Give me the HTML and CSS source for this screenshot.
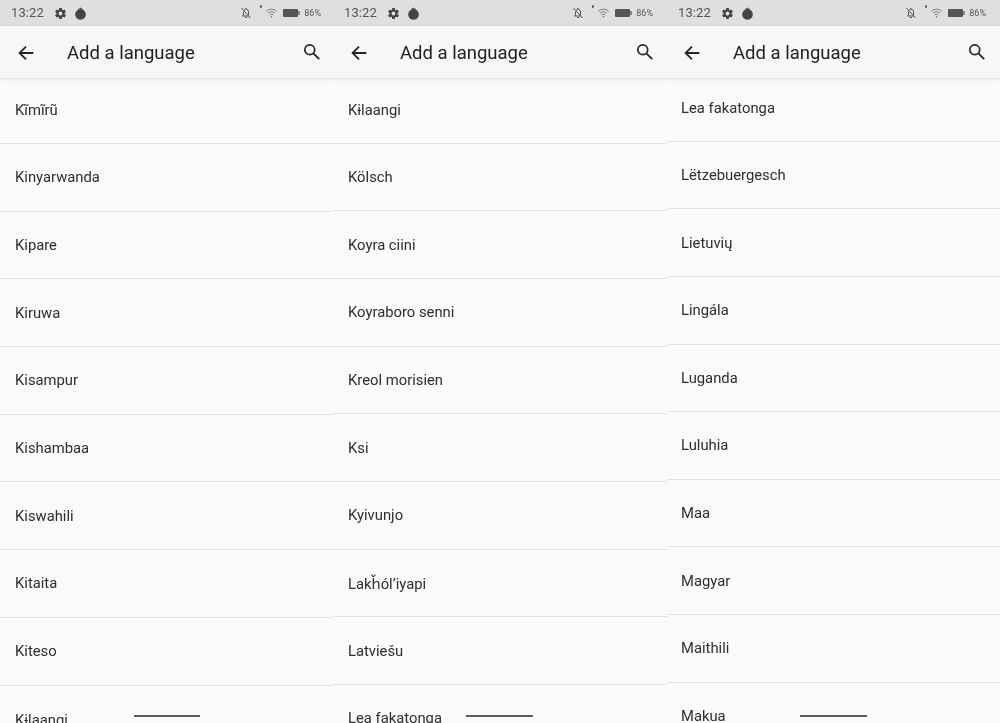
FILE: index.html
```html
<!DOCTYPE html>
<html lang="en">
<head>
<meta charset="utf-8">
<title>Add a language</title>
<link rel="stylesheet" href="styles.css">
</head>
<body>
<svg class="defs" width="0" height="0" aria-hidden="true">
  <defs>
    <symbol id="gear" viewBox="0 0 24 24"><path fill="currentColor" fill-rule="evenodd" d="M19.4 13a7.5 7.5 0 0 0 0-2l2.6-2-2.500-4.300-3 1.200a7.600 7.600 0 0 0-1.700-1L14.400 1.700H9.600L9.200 4.900a7.600 7.600 0 0 0-1.700 1l-3-1.200L2 9l2.600 2a7.500 7.500 0 0 0 0 2L2 15l2.500 4.300 3-1.200a7.600 7.600 0 0 0 1.700 1l.4 3.200h4.800l.4-3.200a7.600 7.600 0 0 0 1.700-1l3 1.200L22 15zM12 15.500a3.500 3.500 0 1 1 0-7 3.500 3.500 0 0 1 0 7z"/></symbol>
    <symbol id="blob" viewBox="0 0 24 24"><path fill="currentColor" d="M12 .5l1.600 2.700 2.600-.9-.7 2.300a9.800 9.800 0 1 1-7 0l-.7-2.300 2.600.9z"/></symbol>
    <symbol id="bell-off" viewBox="0 0 24 24"><path fill="none" stroke="currentColor" stroke-width="2" d="M3 2l18 20M8 6.500A5 5 0 0 1 17 10v6M7 9v7l-2 2h13M10 21h4M12 2v2"/></symbol>
    <symbol id="wifi" viewBox="0 0 24 24"><path fill="none" stroke="currentColor" stroke-width="1.600" d="M1.500 8.500a15 15 0 0 1 21 0M5 12.500a10 10 0 0 1 14 0M8.500 16a5 5 0 0 1 7 0"/><circle cx="12" cy="19.500" r="1.600" fill="currentColor"/></symbol>
    <symbol id="back" viewBox="0 0 24 24"><path fill="none" stroke="currentColor" stroke-width="2" d="M20 12H5M12 5l-7 7 7 7"/></symbol>
    <symbol id="search" viewBox="0 0 20 20"><circle cx="7.500" cy="7.500" r="5.500" fill="none" stroke="currentColor" stroke-width="1.900"/><path fill="none" stroke="currentColor" stroke-width="2" d="M11.500 11.500l6.500 6.500"/></symbol>
  </defs>
</svg>
<main class="screens">

<section class="phone phone-a">
  <div class="status">
    <span class="time">13:22</span>
    <svg class="ic-gear"><use href="#gear"/></svg>
    <svg class="ic-blob"><use href="#blob"/></svg>
    <span class="status-right">
      <svg class="ic-bell"><use href="#bell-off"/></svg>
      <span class="dot"></span>
      <svg class="ic-wifi"><use href="#wifi"/></svg>
      <span class="battery"><span class="battery-nub"></span></span>
      <span class="pct">86%</span>
    </span>
  </div>
  <header class="appbar">
    <svg class="ic-back"><use href="#back"/></svg>
    <h1 class="title">Add a language</h1>
    <svg class="ic-search"><use href="#search"/></svg>
  </header>
  <ul class="list">
    <li class="row">Kĩmĩrũ</li>
    <li class="row">Kinyarwanda</li>
    <li class="row">Kipare</li>
    <li class="row">Kiruwa</li>
    <li class="row">Kisampur</li>
    <li class="row">Kishambaa</li>
    <li class="row">Kiswahili</li>
    <li class="row">Kitaita</li>
    <li class="row">Kiteso</li>
    <li class="row">Kɨlaangi</li>
  </ul>
  <span class="home"></span>
</section>

<section class="phone phone-b">
  <div class="status">
    <span class="time">13:22</span>
    <svg class="ic-gear"><use href="#gear"/></svg>
    <svg class="ic-blob"><use href="#blob"/></svg>
    <span class="status-right">
      <svg class="ic-bell"><use href="#bell-off"/></svg>
      <span class="dot"></span>
      <svg class="ic-wifi"><use href="#wifi"/></svg>
      <span class="battery"><span class="battery-nub"></span></span>
      <span class="pct">86%</span>
    </span>
  </div>
  <header class="appbar">
    <svg class="ic-back"><use href="#back"/></svg>
    <h1 class="title">Add a language</h1>
    <svg class="ic-search"><use href="#search"/></svg>
  </header>
  <ul class="list">
    <li class="row">Kɨlaangi</li>
    <li class="row">Kölsch</li>
    <li class="row">Koyra ciini</li>
    <li class="row">Koyraboro senni</li>
    <li class="row">Kreol morisien</li>
    <li class="row">Ksi</li>
    <li class="row">Kyivunjo</li>
    <li class="row">Lakȟól’iyapi</li>
    <li class="row">Latviešu</li>
    <li class="row">Lea fakatonga</li>
  </ul>
  <span class="home"></span>
</section>

<section class="phone phone-c">
  <div class="status">
    <span class="time">13:22</span>
    <svg class="ic-gear"><use href="#gear"/></svg>
    <svg class="ic-blob"><use href="#blob"/></svg>
    <span class="status-right">
      <svg class="ic-bell"><use href="#bell-off"/></svg>
      <span class="dot"></span>
      <svg class="ic-wifi"><use href="#wifi"/></svg>
      <span class="battery"><span class="battery-nub"></span></span>
      <span class="pct">86%</span>
    </span>
  </div>
  <header class="appbar">
    <svg class="ic-back"><use href="#back"/></svg>
    <h1 class="title">Add a language</h1>
    <svg class="ic-search"><use href="#search"/></svg>
  </header>
  <ul class="list">
    <li class="row">Lea fakatonga</li>
    <li class="row">Lëtzebuergesch</li>
    <li class="row">Lietuvių</li>
    <li class="row">Lingála</li>
    <li class="row">Luganda</li>
    <li class="row">Luluhia</li>
    <li class="row">Maa</li>
    <li class="row">Magyar</li>
    <li class="row">Maithili</li>
    <li class="row">Makua</li>
  </ul>
  <span class="home"></span>
</section>

</main>
</body>
</html>
```
FILE: styles.css
```css
* { box-sizing: border-box; }
html, body { margin: 0; height: 100%; overflow: hidden; background: #fafafa; }
body { font-family: Roboto, "Noto Sans", sans-serif; color: #2b2b2b; }
.defs { position: absolute; }
.screens { display: grid; grid-template-columns: 333px 334px 333px; height: 723px; overflow: hidden; filter: blur(.3px); }
.phone { position: relative; display: flex; flex-direction: column; height: 723px; overflow: hidden; background: #fafafa; }

.status { display: flex; align-items: center; height: 26px; padding: 0 12px 0 11px; background: #dfdfdf; color: #4a4a4a; flex: none; }
.phone-b .status, .phone-c .status { padding-right: 14px; }
.time { font-size: 13px; line-height: 26px; letter-spacing: .1px; width: 33px; color: #555; }
.ic-gear { width: 13px; height: 13px; margin-left: 10px; color: #444; }
.ic-blob { width: 13px; height: 13px; margin-left: 7px; color: #444; }
.status-right { display: flex; align-items: center; margin-left: auto; }
.ic-bell { width: 12px; height: 12px; color: #555; }
.dot { width: 2px; height: 3px; margin: -13px 0 0 8px; background: #555; border-radius: 50%; }
.ic-wifi { width: 13px; height: 12px; margin-left: 3px; color: #666; }
.battery { position: relative; width: 15px; height: 8px; margin: 0 2px 0 5px; background: #555; border-radius: 1px; }
.battery-nub { position: absolute; left: 15px; top: 2px; width: 2px; height: 4px; background: #888; }
.pct { font-size: 9px; line-height: 26px; margin-left: 4px; color: #555; }

.appbar { position: relative; z-index: 1; display: flex; align-items: center; height: 52px; padding: 2px 12px 0 15px; background: #f7f7f7; box-shadow: 0 1px 3px rgba(0,0,0,.14); flex: none; }
.phone-b .appbar { padding-right: 13px; }
.phone-c .appbar { padding-left: 14px; padding-right: 14px; }
.ic-back { width: 22px; height: 22px; color: #262626; }
.title { margin: 0 0 0 30px; font-size: 18.500px; font-weight: 400; color: #222; line-height: 50px; }
.ic-search { width: 18px; height: 18px; margin: 0 0 2px auto; color: #262626; }

.list { list-style: none; margin: -1.700px 0 0; padding: 0; }
.phone-b .list { margin-top: -2.200px; }
.phone-c .list { margin-top: -3.800px; }
.row { display: flex; align-items: center; height: 67.700px; padding: 0 15px; font-size: 14.800px; color: #2e2e2e; border-bottom: 1px solid #e2e2e2; }
.phone-c .row { height: 67.600px; padding-left: 14px; }

.home { position: absolute; left: 134px; top: 715px; width: 66px; height: 2px; background: #5c5c5c; }
.phone-b .home, .phone-c .home { left: 133px; width: 67px; }
```
